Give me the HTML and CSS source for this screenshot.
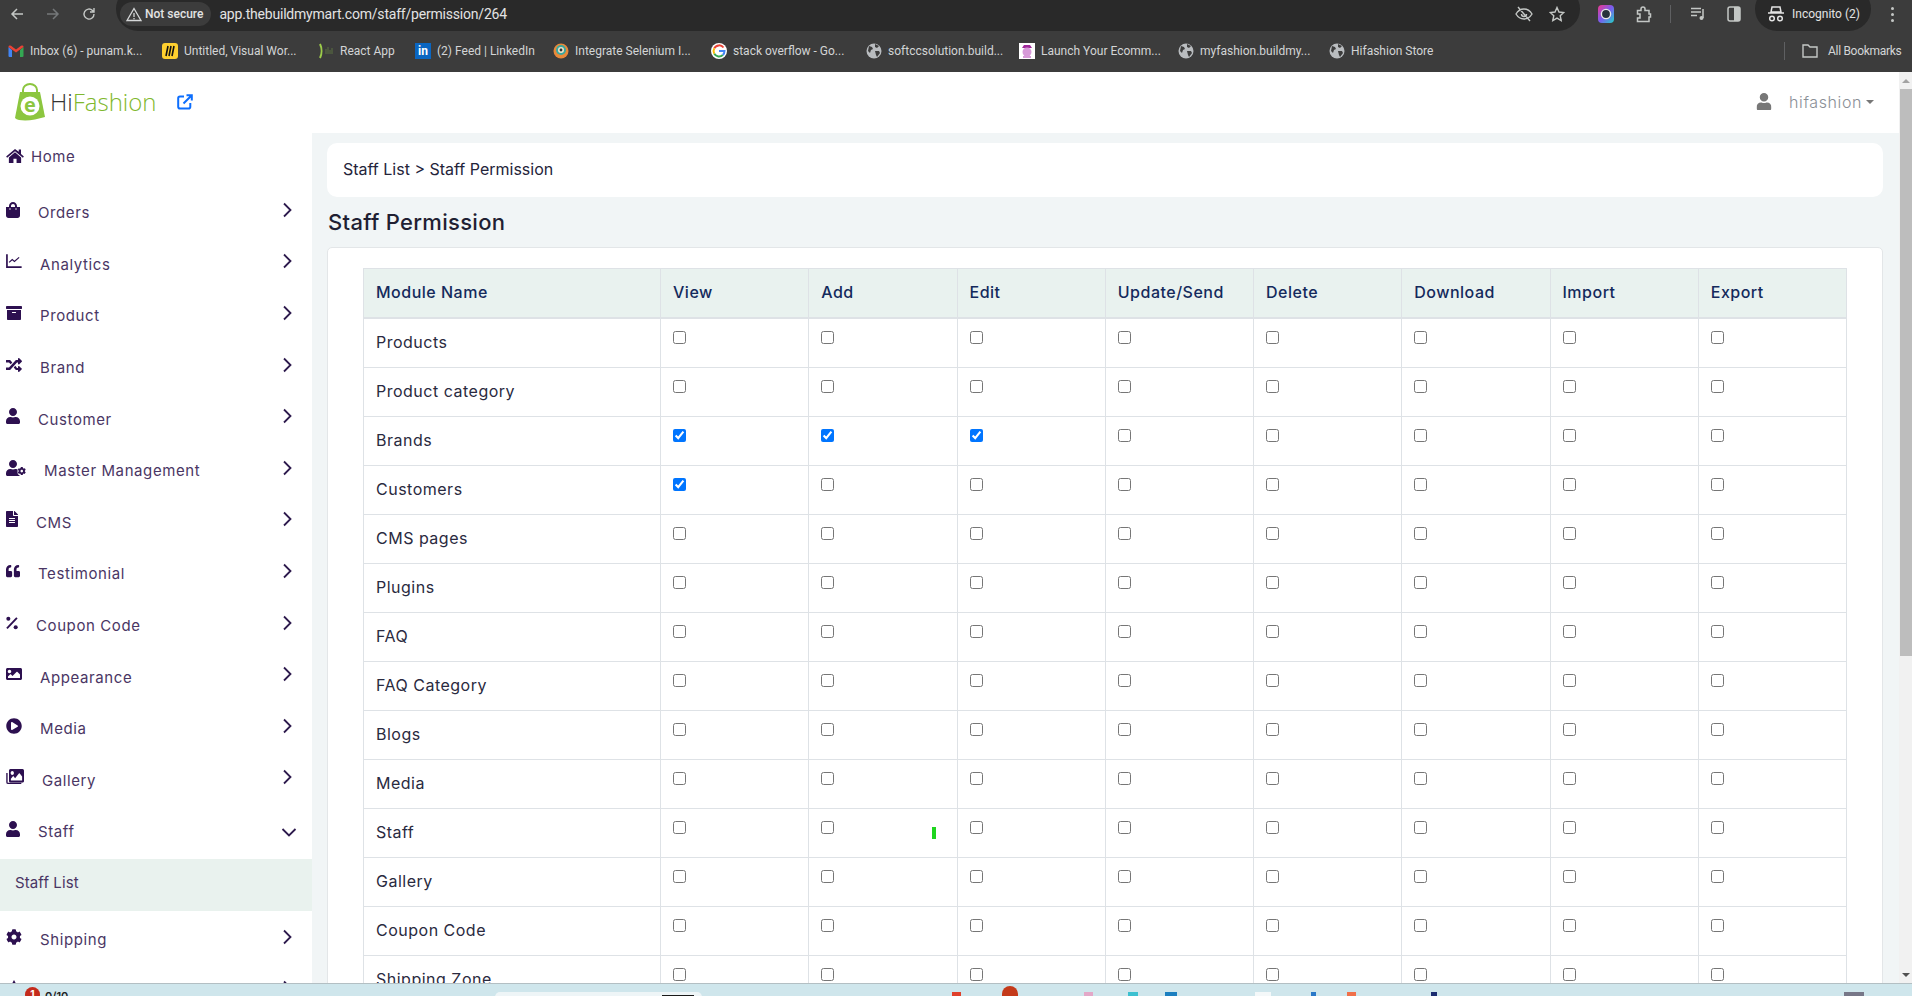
FILE: index.html
```html
<!DOCTYPE html>
<html>
    <head>
        <title>Staff Permission</title>
        <link rel="stylesheet" href="styles.css">
    </head>
    <body>
        <svg class="defs">
            <symbol id="chev" viewBox="0 0 10 16"><path d="M2 1.5L8.5 8 2 14.5" fill="none" stroke="#2d1a4d" stroke-width="1.8"/></symbol>
            <symbol id="user" viewBox="0 0 448 512"><path d="M224 256c70.7 0 128-57.3 128-128S294.7 0 224 0 96 57.3 96 128s57.3 128 128 128zm89.6 32h-16.7c-22.2 10.2-46.9 16-72.9 16s-50.6-5.8-72.9-16h-16.7C60.2 288 0 348.2 0 422.4V464c0 26.5 21.5 48 48 48h352c26.5 0 48-21.5 48-48v-41.6c0-74.2-60.2-134.4-134.4-134.4z"/></symbol>
            <symbol id="cog" viewBox="0 0 512 512"><path d="M487.4 315.7l-42.6-24.6c4.3-23.2 4.3-47 0-70.2l42.6-24.6c4.9-2.8 7.1-8.6 5.5-14-11.1-35.6-30-67.8-54.7-94.6-3.8-4.1-10-5.1-14.8-2.3L380.8 110c-17.9-15.4-38.5-27.3-60.8-35.1V25.8c0-5.6-3.9-10.5-9.4-11.7-36.7-8.2-74.3-7.8-109.2 0-5.5 1.2-9.4 6.1-9.4 11.7V75c-22.2 7.9-42.8 19.8-60.8 35.1L88.7 85.5c-4.9-2.8-11-1.9-14.8 2.3-24.7 26.7-43.6 58.9-54.7 94.6-1.7 5.4.6 11.2 5.5 14L67.3 221c-4.3 23.2-4.3 47 0 70.2l-42.6 24.6c-4.9 2.8-7.1 8.6-5.5 14 11.1 35.6 30 67.8 54.7 94.6 3.8 4.1 10 5.1 14.8 2.3l42.6-24.6c17.9 15.4 38.5 27.3 60.8 35.1v49.2c0 5.6 3.9 10.5 9.4 11.7 36.7 8.2 74.3 7.8 109.2 0 5.5-1.2 9.4-6.1 9.4-11.7v-49.2c22.2-7.9 42.8-19.8 60.8-35.1l42.6 24.6c4.9 2.8 11 1.9 14.8-2.3 24.7-26.7 43.6-58.9 54.7-94.6 1.5-5.5-.7-11.3-5.6-14.1zM256 336c-44.1 0-80-35.9-80-80s35.9-80 80-80 80 35.9 80 80-35.9 80-80 80z"/></symbol>
            <symbol id="globe" viewBox="0 0 16 16"><circle cx="8" cy="8" r="7.5" fill="#b9bcbf"/><path d="M3 3l3 1 1 2-2 1-1 3-2-2zM9 1l4 2-2 2-2-1zM9 8l4 0 1 2-3 4-1-2z" fill="#3c3c3c"/></symbol>
        </svg>

        <div class="toolbar">
            <div class="nav-btns">
                <svg width="14" height="14" viewBox="0 0 14 14"><path d="M13 7H2M7 2L2 7l5 5" fill="none" stroke="#c4c7c5" stroke-width="1.5"/></svg>
                <svg width="14" height="14" viewBox="0 0 14 14"><path d="M1 7h11M7 2l5 5-5 5" fill="none" stroke="#75787a" stroke-width="1.5"/></svg>
                <svg width="14" height="14" viewBox="0 0 14 14"><path d="M12 7a5 5 0 1 1-1.5-3.5L12 5M12 1v4H8" fill="none" stroke="#c4c7c5" stroke-width="1.4"/></svg>
            </div>
            <div class="omnibox">
                <div class="not-secure">
                    <svg width="16" height="15" viewBox="0 0 16 15"><path d="M8 1.5L15 13.5H1zM8 6v4M8 11v1.2" fill="none" stroke="#d5d7d8" stroke-width="1.3"/></svg>
                    <span>Not secure</span>
                </div>
                <span class="url">app.thebuildmymart.com/staff/permission/264</span>
                <div class="omni-right">
                    <svg width="18" height="18" viewBox="0 0 18 18"><path d="M1 9s3-5 8-5 8 5 8 5-3 5-8 5-8-5-8-5zM3 2l12 14M6.5 9a2.5 2.5 0 0 0 5 0" fill="none" stroke="#c4c7c5" stroke-width="1.4"/></svg>
                    <svg width="16" height="16" viewBox="0 0 16 16"><path d="M8 1.5l2 4.5 4.8.5-3.6 3.2 1 4.8L8 12.1l-4.2 2.4 1-4.8L1.2 6.5 6 6z" fill="none" stroke="#c4c7c5" stroke-width="1.4"/></svg>
                </div>
            </div>
            <div class="ext-btns">
                <svg width="16" height="18" viewBox="0 0 16 18"><defs><linearGradient id="ring" x1="0" y1="0" x2="1" y2="1"><stop offset="0" stop-color="#f0388c"/><stop offset=".5" stop-color="#7a5cf0"/><stop offset="1" stop-color="#22d3c5"/></linearGradient></defs><rect width="16" height="18" rx="4" fill="url(#ring)"/><circle cx="8" cy="9" r="4.6" fill="#26323c" stroke="#e8e8e8" stroke-width="1.4"/></svg>
                <svg class="ext-puzzle" width="16" height="17" viewBox="0 0 16 17"><path d="M1.5 4.5H5V3a2 2 0 0 1 4 0v1.5h4V8h1.500v3H13v4.500H1.500V12H4V8H1.500z" fill="none" stroke="#c4c7c5" stroke-width="1.5"/></svg>
                <i class="tb-sep"></i>
                <svg width="16" height="14" viewBox="0 0 16 14"><path d="M0 1.5h10M0 5h10M0 8.5h6" stroke="#c4c7c5" stroke-width="1.5"/><path d="M12 2v9" stroke="#c4c7c5" stroke-width="1.5"/><circle cx="10.5" cy="11" r="2" fill="#c4c7c5"/></svg>
                <svg width="14" height="16" viewBox="0 0 14 16"><rect x="1" y="1" width="12" height="14" rx="2" fill="none" stroke="#c4c7c5" stroke-width="1.5"/><rect x="7" y="1" width="6" height="14" fill="#c4c7c5"/></svg>
            </div>
            <div class="incognito">
                <svg width="18" height="16" viewBox="0 0 18 16"><path d="M5 1h8l1 5H4zM1 7h16" fill="none" stroke="#e3e3e3" stroke-width="1.5"/><circle cx="5" cy="12.5" r="2.3" fill="none" stroke="#e3e3e3" stroke-width="1.5"/><circle cx="13" cy="12.5" r="2.3" fill="none" stroke="#e3e3e3" stroke-width="1.5"/></svg>
                <span>Incognito (2)</span>
            </div>
            <div class="kebab"><i></i><i></i><i></i></div>
        </div>

        <div class="bookmarks">
            <a class="bm bm-1"><svg width="15" height="12" viewBox="0 0 15 12"><path d="M0 2v9a1 1 0 0 0 1 1h2.5V5z" fill="#4285f4"/><path d="M15 2v9a1 1 0 0 1-1 1h-2.5V5z" fill="#34a853"/><path d="M0 2l7.5 5.5L15 2a1.5 1.5 0 0 0-2.5-1.2L7.5 4.5 2.5.8A1.5 1.5 0 0 0 0 2z" fill="#ea4335"/></svg><span>Inbox (6) - punam.k...</span></a>
            <a class="bm bm-2"><svg width="16" height="16" viewBox="0 0 16 16"><rect width="16" height="16" rx="3" fill="#ffd02f"/><path d="M6 3L4 13M9 3l-2 10M12 3l-2 10" stroke="#111" stroke-width="1.6"/></svg><span>Untitled, Visual Wor...</span></a>
            <a class="bm bm-3"><svg width="16" height="16" viewBox="0 0 16 16"><path d="M2 1c2 4 2 10 0 14" fill="none" stroke="#9ccc4a" stroke-width="2"/><path d="M8 11V6M10 11V4M12 11V7M14 11V5" stroke="#5a7040" stroke-width="1"/></svg><span>React App</span></a>
            <a class="bm bm-4"><span class="li-icon">in</span><span>(2) Feed | LinkedIn</span></a>
            <a class="bm bm-5"><svg width="16" height="16" viewBox="0 0 16 16"><circle cx="8" cy="8" r="7.5" fill="#e8893a"/><circle cx="8" cy="7" r="5" fill="#3aa8a0"/><circle cx="8" cy="7" r="3" fill="#f1e3c8"/><circle cx="8" cy="7" r="1.4" fill="#333"/></svg><span>Integrate Selenium I...</span></a>
            <a class="bm bm-6"><svg width="16" height="16" viewBox="0 0 16 16"><circle cx="8" cy="8" r="8" fill="#fff"/><path d="M12.5 4.5A5.5 5.5 0 0 0 3.3 5.3" fill="none" stroke="#ea4335" stroke-width="2"/><path d="M3.3 5.3a5.5 5.5 0 0 0 0 5.4" fill="none" stroke="#fbbc05" stroke-width="2"/><path d="M3.3 10.7a5.5 5.5 0 0 0 8.5 1.3" fill="none" stroke="#34a853" stroke-width="2"/><path d="M11.8 12c1.2-1 1.7-2.4 1.7-4H8" fill="none" stroke="#4285f4" stroke-width="2"/></svg><span>stack overflow - Go...</span></a>
            <a class="bm bm-7"><svg class="ico-16" viewBox="0 0 16 16"><use href="#globe"/></svg><span>softccsolution.build...</span></a>
            <a class="bm bm-8"><svg width="16" height="16" viewBox="0 0 16 16"><rect width="16" height="16" fill="#fff"/><path d="M3 5h10L11 2H5z" fill="#a0289a"/><circle cx="8" cy="9" r="4.5" fill="#d79ad8"/><path d="M4 14h8" stroke="#d79ad8" stroke-width="2"/></svg><span>Launch Your Ecomm...</span></a>
            <a class="bm bm-9"><svg class="ico-16" viewBox="0 0 16 16"><use href="#globe"/></svg><span>myfashion.buildmy...</span></a>
            <a class="bm bm-10"><svg class="ico-16" viewBox="0 0 16 16"><use href="#globe"/></svg><span>Hifashion Store</span></a>
            <div class="bm-all">
                <i class="tb-sep"></i>
                <svg width="16" height="14" viewBox="0 0 16 14"><path d="M1 1h5l2 2h7v10H1z" fill="none" stroke="#c4c7c5" stroke-width="1.4"/></svg>
                <span>All Bookmarks</span>
            </div>
        </div>

        <div class="page">
            <div class="viewport">
                <header class="app-header">
                    <div class="brand">
                        <svg class="brand-bag" width="30" height="38" viewBox="0 0 30 38"><path d="M8 12V7a7 6 0 0 1 14 0v5" fill="none" stroke="#8cc63f" stroke-width="2"/><path d="M5 9h20l5 25-10 2.5C12 38 3 38 0 35z" fill="#8cc63f"/><circle cx="15" cy="23" r="9.5" fill="#fff"/><text x="15" y="29" class="bag-e">e</text></svg>
                        <span class="brand-name"><span class="brand-hi">Hi</span>Fashion</span>
                        <svg class="brand-link" width="16" height="16" viewBox="0 0 16 16"><path d="M7 2.5H3A1.8 1.8 0 0 0 1.2 4.3v8.5A1.8 1.8 0 0 0 3 14.600h8.500a1.800 1.800 0 0 0 1.800-1.800V9M9.500 1.200h5.300v5.300M14.500 1.500L6.500 9.500" fill="none" stroke="#0d6efd" stroke-width="2"/></svg>
                    </div>
                    <div class="account">
                        <svg class="account-icon" viewBox="0 0 448 512"><use href="#user"/></svg>
                        <span>hifashion</span>
                        <i class="caret"></i>
                    </div>
                </header>
                <div class="app-body">
                    <aside class="sidebar">
                        <a class="nav-home">
                            <svg class="ico-18" viewBox="0 0 576 512"><path d="M288 32L4 270l32 38L288 104l252 204 32-38-92-76V50h-72v68zM92 300v180h146V345h100v135h146V300L288 135z"/></svg>
                            <span>Home</span>
                        </a>
                        <a class="nav-item">
                            <svg class="ico-14" viewBox="0 0 448 512"><path d="M352 160v-32C352 57.42 294.579 0 224 0 153.42 0 96 57.42 96 128v32H0v272c0 44.183 35.817 80 80 80h288c44.183 0 80-35.817 80-80V160h-96zm-192-32c0-35.29 28.71-64 64-64s64 28.71 64 64v32H160v-32zm160 120c-13.255 0-24-10.745-24-24s10.745-24 24-24 24 10.745 24 24-10.745 24-24 24zm-192 0c-13.255 0-24-10.745-24-24s10.745-24 24-24 24 10.745 24 24-10.745 24-24 24z"/></svg>
                            <span>Orders</span>
                            <svg class="chev" viewBox="0 0 10 16"><use href="#chev"/></svg>
                        </a>
                        <a class="nav-item">
                            <svg class="ico-16" viewBox="0 0 512 512"><path d="M30 40v410h470" fill="none" stroke="currentColor" stroke-width="54"/><path d="M100 300l100-90 70 60 150-130" fill="none" stroke="currentColor" stroke-width="40"/></svg>
                            <span>Analytics</span>
                            <svg class="chev" viewBox="0 0 10 16"><use href="#chev"/></svg>
                        </a>
                        <a class="nav-item">
                            <svg class="ico-16" viewBox="0 0 512 512"><path d="M32 448c0 17.700 14.300 32 32 32h384c17.700 0 32-14.300 32-32V160H32v288zm160-212c0-6.600 5.400-12 12-12h104c6.600 0 12 5.400 12 12v8c0 6.600-5.400 12-12 12H204c-6.600 0-12-5.400-12-12v-8zM480 32H32C14.300 32 0 46.300 0 64v48c0 8.800 7.200 16 16 16h480c8.800 0 16-7.200 16-16V64c0-17.700-14.300-32-32-32z"/></svg>
                            <span>Product</span>
                            <svg class="chev" viewBox="0 0 10 16"><use href="#chev"/></svg>
                        </a>
                        <a class="nav-item">
                            <svg class="ico-16" viewBox="0 0 512 512"><path d="M504.971 359.029c9.373 9.373 9.373 24.569 0 33.941l-80 79.984c-15.010 15.010-40.971 4.490-40.971-16.971V416h-58.785a12.004 12.004 0 0 1-8.773-3.812l-70.556-75.596 53.333-57.143L352 352h32v-39.981c0-21.438 25.943-31.998 40.971-16.971l80 79.981zM12 176h84l52.781 56.551 53.333-57.143-70.556-75.596A11.999 11.999 0 0 0 122.785 96H12c-6.627 0-12 5.373-12 12v56c0 6.627 5.373 12 12 12zm372 0v39.984c0 21.460 25.961 31.980 40.971 16.971l80-79.984c9.373-9.373 9.373-24.569 0-33.941l-80-79.981C409.943 24.021 384 34.582 384 56.019V96h-58.785a12.004 12.004 0 0 0-8.773 3.812L96 336H12c-6.627 0-12 5.373-12 12v56c0 6.627 5.373 12 12 12h110.785c3.326 0 6.503-1.381 8.773-3.812L352 176h32z"/></svg>
                            <span>Brand</span>
                            <svg class="chev" viewBox="0 0 10 16"><use href="#chev"/></svg>
                        </a>
                        <a class="nav-item">
                            <svg class="ico-14" viewBox="0 0 448 512"><use href="#user"/></svg>
                            <span>Customer</span>
                            <svg class="chev" viewBox="0 0 10 16"><use href="#chev"/></svg>
                        </a>
                        <a class="nav-item">
                            <svg class="ico-20" viewBox="0 0 640 512"><svg width="448" height="512" viewBox="0 0 448 512"><use href="#user"/></svg><svg x="370" y="220" width="270" height="270" viewBox="0 0 512 512"><circle cx="256" cy="256" r="300" fill="#fff"/><use href="#cog"/></svg></svg>
                            <span>Master Management</span>
                            <svg class="chev" viewBox="0 0 10 16"><use href="#chev"/></svg>
                        </a>
                        <a class="nav-item">
                            <svg class="ico-12" viewBox="0 0 384 512"><path d="M224 136V0H24C10.700 0 0 10.700 0 24v464c0 13.300 10.700 24 24 24h336c13.300 0 24-10.700 24-24V160H248c-13.200 0-24-10.800-24-24zm64 236c0 6.600-5.400 12-12 12H108c-6.600 0-12-5.400-12-12v-8c0-6.600 5.400-12 12-12h168c6.600 0 12 5.400 12 12v8zm0-64c0 6.600-5.400 12-12 12H108c-6.600 0-12-5.400-12-12v-8c0-6.600 5.400-12 12-12h168c6.600 0 12 5.400 12 12v8zm0-72v8c0 6.600-5.400 12-12 12H108c-6.600 0-12-5.400-12-12v-8c0-6.600 5.400-12 12-12h168c6.600 0 12 5.400 12 12zm96-114.100v6.100H256V0h6.100c6.400 0 12.500 2.500 17 7l97.900 98c4.500 4.500 7 10.600 7 16.900z"/></svg>
                            <span>CMS</span>
                            <svg class="chev" viewBox="0 0 10 16"><use href="#chev"/></svg>
                        </a>
                        <a class="nav-item">
                            <svg class="ico-14" viewBox="0 0 512 512"><path d="M464 256h-80v-64c0-35.300 28.700-64 64-64h8c13.300 0 24-10.700 24-24V56c0-13.300-10.700-24-24-24h-8c-88.400 0-160 71.600-160 160v240c0 26.500 21.500 48 48 48h128c26.500 0 48-21.500 48-48V304c0-26.500-21.500-48-48-48zm-288 0H96v-64c0-35.300 28.700-64 64-64h8c13.300 0 24-10.700 24-24V56c0-13.300-10.700-24-24-24h-8C71.600 32 0 103.600 0 192v240c0 26.500 21.500 48 48 48h128c26.500 0 48-21.500 48-48V304c0-26.500-21.500-48-48-48z"/></svg>
                            <span>Testimonial</span>
                            <svg class="chev" viewBox="0 0 10 16"><use href="#chev"/></svg>
                        </a>
                        <a class="nav-item">
                            <svg class="ico-12" viewBox="0 0 384 512"><circle cx="75" cy="120" r="65"/><circle cx="310" cy="390" r="65"/><path d="M350 90L30 430" stroke="currentColor" stroke-width="60"/></svg>
                            <span>Coupon Code</span>
                            <svg class="chev" viewBox="0 0 10 16"><use href="#chev"/></svg>
                        </a>
                        <a class="nav-item">
                            <svg class="ico-16" viewBox="0 0 512 512"><path d="M464 448H48c-26.510 0-48-21.490-48-48V112c0-26.510 21.490-48 48-48h416c26.510 0 48 21.490 48 48v288c0 26.510-21.490 48-48 48zM112 120c-30.928 0-56 25.072-56 56s25.072 56 56 56 56-25.072 56-56-25.072-56-56-56zM64 384h384V272l-87.515-87.515c-4.686-4.686-12.284-4.686-16.971 0L208 320l-55.515-55.515c-4.686-4.686-12.284-4.686-16.971 0L64 336v48z"/></svg>
                            <span>Appearance</span>
                            <svg class="chev" viewBox="0 0 10 16"><use href="#chev"/></svg>
                        </a>
                        <a class="nav-item">
                            <svg class="ico-16" viewBox="0 0 512 512"><path d="M256 8C119 8 8 119 8 256s111 248 248 248 248-111 248-248S393 8 256 8zm115.700 272l-176 101c-15.800 8.800-35.700-2.500-35.700-21V152c0-18.400 19.800-29.800 35.700-21l176 107c16.400 9.200 16.400 33 0 42z"/></svg>
                            <span>Media</span>
                            <svg class="chev" viewBox="0 0 10 16"><use href="#chev"/></svg>
                        </a>
                        <a class="nav-item">
                            <svg class="ico-18" viewBox="0 0 576 512"><path d="M30 130v290a40 40 0 0 0 40 40h420" fill="none" stroke="currentColor" stroke-width="44"/><svg x="96" y="0" width="480" height="440" viewBox="0 64 512 384" preserveAspectRatio="none"><path d="M464 448H48c-26.510 0-48-21.490-48-48V112c0-26.510 21.490-48 48-48h416c26.510 0 48 21.490 48 48v288c0 26.510-21.490 48-48 48zM112 120c-30.928 0-56 25.072-56 56s25.072 56 56 56 56-25.072 56-56-25.072-56-56-56zM64 384h384V272l-87.515-87.515c-4.686-4.686-12.284-4.686-16.971 0L208 320l-55.515-55.515c-4.686-4.686-12.284-4.686-16.971 0L64 336v48z"/></svg></svg>
                            <span>Gallery</span>
                            <svg class="chev" viewBox="0 0 10 16"><use href="#chev"/></svg>
                        </a>
                        <a class="nav-item">
                            <svg class="ico-14" viewBox="0 0 448 512"><use href="#user"/></svg>
                            <span>Staff</span>
                            <svg class="chev-down" viewBox="0 0 16 10"><path d="M1.5 2L8 8.5 14.5 2" fill="none" stroke="#2d1a4d" stroke-width="1.8"/></svg>
                        </a>
                        <a class="nav-sub">Staff List</a>
                        <a class="nav-item">
                            <svg class="ico-16" viewBox="0 0 512 512"><use href="#cog"/></svg>
                            <span>Shipping</span>
                            <svg class="chev" viewBox="0 0 10 16"><use href="#chev"/></svg>
                        </a>
                        <a class="nav-item">
                            <svg class="ico-16" viewBox="0 0 512 512"><path d="M256 0l70 130v382H186V130z"/></svg>
                            <svg class="chev" viewBox="0 0 10 16"><use href="#chev"/></svg>
                        </a>
                    </aside>
                    <main class="main">
                        <div class="crumbs">Staff List &gt; Staff Permission</div>
                        <h1 class="title">Staff Permission</h1>
                        <div class="card">
                            <table class="perm-table">
                                <thead>
                                    <tr><th>Module Name</th><th>View</th><th>Add</th><th>Edit</th><th>Update/Send</th><th>Delete</th><th>Download</th><th>Import</th><th>Export</th></tr>
                                </thead>
                                <tbody>
                                    <tr><td>Products</td><td><input type="checkbox"></td><td><input type="checkbox"></td><td><input type="checkbox"></td><td><input type="checkbox"></td><td><input type="checkbox"></td><td><input type="checkbox"></td><td><input type="checkbox"></td><td><input type="checkbox"></td></tr>
                                    <tr><td>Product category</td><td><input type="checkbox"></td><td><input type="checkbox"></td><td><input type="checkbox"></td><td><input type="checkbox"></td><td><input type="checkbox"></td><td><input type="checkbox"></td><td><input type="checkbox"></td><td><input type="checkbox"></td></tr>
                                    <tr><td>Brands</td><td><input type="checkbox" checked></td><td><input type="checkbox" checked></td><td><input type="checkbox" checked></td><td><input type="checkbox"></td><td><input type="checkbox"></td><td><input type="checkbox"></td><td><input type="checkbox"></td><td><input type="checkbox"></td></tr>
                                    <tr><td>Customers</td><td><input type="checkbox" checked></td><td><input type="checkbox"></td><td><input type="checkbox"></td><td><input type="checkbox"></td><td><input type="checkbox"></td><td><input type="checkbox"></td><td><input type="checkbox"></td><td><input type="checkbox"></td></tr>
                                    <tr><td>CMS pages</td><td><input type="checkbox"></td><td><input type="checkbox"></td><td><input type="checkbox"></td><td><input type="checkbox"></td><td><input type="checkbox"></td><td><input type="checkbox"></td><td><input type="checkbox"></td><td><input type="checkbox"></td></tr>
                                    <tr><td>Plugins</td><td><input type="checkbox"></td><td><input type="checkbox"></td><td><input type="checkbox"></td><td><input type="checkbox"></td><td><input type="checkbox"></td><td><input type="checkbox"></td><td><input type="checkbox"></td><td><input type="checkbox"></td></tr>
                                    <tr><td>FAQ</td><td><input type="checkbox"></td><td><input type="checkbox"></td><td><input type="checkbox"></td><td><input type="checkbox"></td><td><input type="checkbox"></td><td><input type="checkbox"></td><td><input type="checkbox"></td><td><input type="checkbox"></td></tr>
                                    <tr><td>FAQ Category</td><td><input type="checkbox"></td><td><input type="checkbox"></td><td><input type="checkbox"></td><td><input type="checkbox"></td><td><input type="checkbox"></td><td><input type="checkbox"></td><td><input type="checkbox"></td><td><input type="checkbox"></td></tr>
                                    <tr><td>Blogs</td><td><input type="checkbox"></td><td><input type="checkbox"></td><td><input type="checkbox"></td><td><input type="checkbox"></td><td><input type="checkbox"></td><td><input type="checkbox"></td><td><input type="checkbox"></td><td><input type="checkbox"></td></tr>
                                    <tr><td>Media</td><td><input type="checkbox"></td><td><input type="checkbox"></td><td><input type="checkbox"></td><td><input type="checkbox"></td><td><input type="checkbox"></td><td><input type="checkbox"></td><td><input type="checkbox"></td><td><input type="checkbox"></td></tr>
                                    <tr><td>Staff</td><td><input type="checkbox"></td><td class="has-mark"><input type="checkbox"><i class="green-mark"></i></td><td><input type="checkbox"></td><td><input type="checkbox"></td><td><input type="checkbox"></td><td><input type="checkbox"></td><td><input type="checkbox"></td><td><input type="checkbox"></td></tr>
                                    <tr><td>Gallery</td><td><input type="checkbox"></td><td><input type="checkbox"></td><td><input type="checkbox"></td><td><input type="checkbox"></td><td><input type="checkbox"></td><td><input type="checkbox"></td><td><input type="checkbox"></td><td><input type="checkbox"></td></tr>
                                    <tr><td>Coupon Code</td><td><input type="checkbox"></td><td><input type="checkbox"></td><td><input type="checkbox"></td><td><input type="checkbox"></td><td><input type="checkbox"></td><td><input type="checkbox"></td><td><input type="checkbox"></td><td><input type="checkbox"></td></tr>
                                    <tr><td>Shipping Zone</td><td><input type="checkbox"></td><td><input type="checkbox"></td><td><input type="checkbox"></td><td><input type="checkbox"></td><td><input type="checkbox"></td><td><input type="checkbox"></td><td><input type="checkbox"></td><td><input type="checkbox"></td></tr>
                                </tbody>
                            </table>
                        </div>
                    </main>
                </div>
            </div>
            <div class="scrollbar">
                <div class="sb-up"></div>
                <div class="sb-thumb"></div>
                <div class="sb-fill"></div>
                <div class="sb-down"></div>
            </div>
        </div>

        <footer class="taskbar">
            <span class="tb-badge">1</span>
            <span class="tb-temp">0/10</span>
            <span class="tb-search"><i></i></span>
            <i class="tb-bit bit-red"></i>
            <i class="tb-bit bit-orange"></i>
            <i class="tb-bit bit-pink"></i>
            <i class="tb-bit bit-teal"></i>
            <i class="tb-bit bit-blue"></i>
            <i class="tb-bit bit-white"></i>
            <i class="tb-bit bit-blue2"></i>
            <i class="tb-bit bit-coral"></i>
            <i class="tb-bit bit-navy"></i>
            <i class="tb-bit bit-gray"></i>
        </footer>
    </body>
</html>
```

FILE: styles.css
```css
*, *:after, *:before {
    box-sizing: border-box;
    margin: 0;
    padding: 0;
}
html, body {
    height: 100%;
}
body {
    display: flex;
    flex-direction: column;
    overflow: hidden;
    font-family: "Inter", "Noto Sans", sans-serif;
    background: #fff;
}
.defs {
    display: none;
}
svg {
    flex: none;
    display: block;
}

/* browser chrome */
.toolbar {
    height: 31px;
    flex: none;
    background: #3c3c3c;
    display: flex;
    align-items: center;
    overflow: hidden;
    font-family: "Roboto", sans-serif;
}
.nav-btns {
    width: 116px;
    flex: none;
    display: flex;
    gap: 22px;
    padding: 0 0 3px 10px;
}
.omnibox {
    width: 1464px;
    flex: none;
    height: 44px;
    margin-top: -13px;
    padding: 10px 16px 0 4px;
    border-radius: 22px;
    background: #292929;
    display: flex;
    align-items: center;
    color: #e3e3e3;
}
.not-secure {
    height: 24px;
    border-radius: 12px;
    background: #3c3c3c;
    display: flex;
    align-items: center;
    gap: 3px;
    padding: 0 8px 0 6px;
    font-size: 12px;
    font-weight: 500;
    color: #e3e3e3;
}
.url {
    margin-left: 8px;
    font-size: 14px;
    letter-spacing: -.2px;
}
.omni-right {
    margin-left: auto;
    display: flex;
    align-items: center;
    gap: 16px;
    margin-right: -1px;
}
.ext-btns {
    width: 175px;
    flex: none;
    display: flex;
    align-items: center;
    gap: 20px;
    padding: 0 0 3px 18px;
}
.ext-puzzle {
    margin: 0 -2px 0 2px;
}
.tb-sep {
    display: block;
    width: 1px;
    height: 18px;
    background: #5f6062;
}
.incognito {
    width: 116px;
    height: 44px;
    margin-top: -13px;
    padding: 10px 0 0 12px;
    flex: none;
    border-radius: 22px;
    background: #292929;
    display: flex;
    align-items: center;
    gap: 7px;
    font-size: 12px;
    color: #e3e3e3;
}
.kebab {
    display: flex;
    flex-direction: column;
    gap: 3px;
    margin: 0 0 3px 20px;
}
.kebab i {
    display: block;
    width: 3px;
    height: 3px;
    border-radius: 50%;
    background: #c4c7c5;
}
.bookmarks {
    height: 41px;
    flex: none;
    background: #3c3c3c;
    display: flex;
    align-items: center;
    padding: 0 0 2px 8px;
    font-family: "Roboto", sans-serif;
    font-size: 12px;
    color: #d3d5d6;
}
.bm {
    display: flex;
    align-items: center;
    gap: 6px;
    flex: none;
    white-space: nowrap;
}
.bm svg {
    width: 16px;
}
.bm-1 { width: 154px; }
.bm-2 { width: 156px; }
.bm-3 { width: 97px; }
.bm-4 { width: 138px; }
.bm-5 { width: 158px; }
.bm-6 { width: 155px; }
.bm-7 { width: 153px; }
.bm-8 { width: 159px; }
.bm-9 { width: 151px; }
.bm-10 { width: 120px; }
.li-icon {
    width: 16px;
    height: 16px;
    background: #0a66c2;
    color: #fff;
    font-weight: 700;
    font-size: 12px;
    line-height: 16px;
    text-align: center;
}
.ico-16 {
    width: 16px;
    height: 16px;
}
.bm-all {
    margin-left: 335px;
    display: flex;
    align-items: center;
    gap: 10px;
    white-space: nowrap;
    letter-spacing: -.3px;
}
.bm-all .tb-sep {
    margin-right: 7px;
}

/* app */
.page {
    height: 911px;
    flex: none;
    display: flex;
    overflow: hidden;
}
.viewport {
    flex: 1;
    min-width: 0;
    overflow: hidden;
}
.scrollbar {
    width: 13px;
    flex: none;
    display: flex;
    flex-direction: column;
    background: #f1f1f1;
}
.sb-up, .sb-down {
    height: 17px;
    flex: none;
    display: flex;
    align-items: center;
    justify-content: center;
}
.sb-up:after {
    content: "";
    border-left: 4px solid transparent;
    border-right: 4px solid transparent;
    border-bottom: 4px solid #a3a3a3;
}
.sb-down:after {
    content: "";
    border-left: 4px solid transparent;
    border-right: 4px solid transparent;
    border-top: 4px solid #505050;
}
.sb-thumb {
    height: 567px;
    flex: none;
    background: #bdbdbd;
    margin-left: 1px;
}
.sb-fill {
    flex: 1;
}
.app-header {
    height: 61px;
    display: flex;
    align-items: center;
    justify-content: space-between;
    padding: 0 25px 2px 0;
    background: #fff;
}
.brand {
    display: flex;
    align-items: center;
    padding-left: 15px;
}
.brand-name {
    margin-left: 5px;
    font-family: "Open Sans", sans-serif;
    font-size: 24px;
    font-weight: 300;
    color: #7fb82e;
}
.brand-hi {
    color: #333;
}
.bag-e {
    font-family: "Open Sans", sans-serif;
    font-size: 20px;
    font-weight: 700;
    fill: #8cc63f;
    text-anchor: middle;
}
.brand-link {
    margin-left: 21px;
}
.account {
    display: flex;
    align-items: center;
    color: #8a8f96;
    font-size: 16px;
    font-weight: 300;
    letter-spacing: .6px;
}
.account-icon {
    width: 16px;
    height: 17px;
    fill: #777;
    margin-right: 17px;
}
.caret {
    margin-left: 4px;
    border-left: 4px solid transparent;
    border-right: 4px solid transparent;
    border-top: 4px solid #777;
}
.app-body {
    display: flex;
}
.sidebar {
    width: 312px;
    flex: none;
    background: #fff;
    font-size: 15px;
    letter-spacing: .6px;
    color: #4a3664;
}
.sidebar svg {
    fill: #2d1050;
    color: #2d1050;
}
.nav-home, .nav-item {
    display: flex;
    align-items: center;
    padding-left: 6px;
}
.nav-home {
    height: 54px;
    padding-bottom: 8px;
    gap: 7px;
}
.nav-item {
    height: 51.6px;
    gap: 18px;
    padding-right: 20px;
}
.nav-item svg {
    margin-bottom: 6px;
}
.ico-12 { width: 12px; height: 16px; }
.ico-14 { width: 14px; height: 16px; }
.ico-18 { width: 18px; height: 16px; }
.ico-20 { width: 20px; height: 16px; }
.chev {
    width: 10px;
    height: 16px;
    margin-left: auto;
}
.chev-down {
    width: 16px;
    height: 10px;
    margin-left: auto;
    margin-right: -5px;
    margin-bottom: 0 !important;
}
.nav-sub {
    display: block;
    height: 52px;
    margin: 1px 0 3px;
    padding-left: 15px;
    line-height: 48px;
    letter-spacing: .1px;
    background: #e9f2ee;
}
.main {
    flex: 1;
    min-width: 0;
    height: 850px;
    padding: 10px 16px 0 15px;
    background: #f1f5f6;
}
.crumbs {
    height: 54px;
    padding-left: 16px;
    border-radius: 10px;
    background: #fff;
    font-size: 16px;
    line-height: 52px;
    color: #24243a;
}
.title {
    height: 50px;
    padding-left: 1px;
    font-size: 22px;
    font-weight: 500;
    letter-spacing: .3px;
    line-height: 50px;
    color: #1f1f33;
}
.card {
    height: 900px;
    padding: 20px 35px;
    border: 1px solid #e3e6e8;
    border-radius: 5px;
    background: #fff;
}
.perm-table {
    width: 1484px;
    table-layout: fixed;
    border-collapse: collapse;
    font-size: 16px;
    letter-spacing: .5px;
    color: #2a2a40;
}
.perm-table th:first-child {
    width: 297px;
}
.perm-table th, .perm-table td {
    height: 49px;
    padding: 12px;
    border: 1px solid #dee2e6;
    line-height: 24px;
    text-align: left;
    vertical-align: top;
}
.perm-table td:first-child {
    padding-top: 11px;
}
.perm-table th {
    padding: 11px 12px 13px;
    background: #e9f2ef;
    border-bottom: 2px solid #dee2e6;
    font-weight: 500;
    color: #142a5c;
}
.perm-table input {
    display: block;
    width: 13px;
    height: 13px;
    margin: 0;
}
.has-mark {
    position: relative;
}
.green-mark {
    position: absolute;
    right: 21px;
    top: 18px;
    width: 4px;
    height: 12px;
    background: #1fd51f;
}

/* what shows of the os taskbar */
.taskbar {
    flex: 1;
    display: flex;
    align-items: flex-start;
    border-top: 1px solid #b3bfc3;
    background: #cfe6ec;
    overflow: hidden;
}
.tb-badge {
    width: 15px;
    height: 15px;
    margin: 3px 0 0 25px;
    border-radius: 50%;
    background: #c42b1c;
    color: #fff;
    font-size: 10px;
    font-weight: 700;
    line-height: 15px;
    text-align: center;
}
.tb-temp {
    margin: 6px 0 0 5px;
    font-size: 11px;
    font-weight: 600;
    line-height: 12px;
    color: #222;
}
.tb-search {
    width: 207px;
    height: 8px;
    margin: 8px 0 0 427px;
    padding-left: 167px;
    border-radius: 5px 5px 0 0;
    background: #eef5f7;
}
.tb-search i {
    display: block;
    width: 32px;
    height: 6px;
    margin-top: 3px;
    background: #1a1a1a;
}
.tb-bit {
    display: block;
    height: 6px;
    margin-top: 8px;
}
.bit-red { width: 9px; margin-left: 250px; background: #e0402b; }
.bit-orange { width: 16px; height: 12px; margin: 2px 0 0 41px; background: #c43a1a; border-radius: 8px 8px 0 0; }
.bit-pink { width: 9px; margin-left: 66px; background: #e3a8c8; }
.bit-teal { width: 10px; margin-left: 35px; background: #3cc0d0; }
.bit-blue { width: 12px; margin-left: 27px; background: #1c7fc0; }
.bit-white { width: 16px; margin-left: 78px; background: #f4f8f9; }
.bit-blue2 { width: 5px; margin-left: 40px; background: #2a78c8; }
.bit-coral { width: 9px; margin-left: 31px; background: #f0704a; }
.bit-navy { width: 6px; margin-left: 75px; background: #1c2c70; }
.bit-gray { width: 20px; margin-left: 407px; background: #778; }
```
